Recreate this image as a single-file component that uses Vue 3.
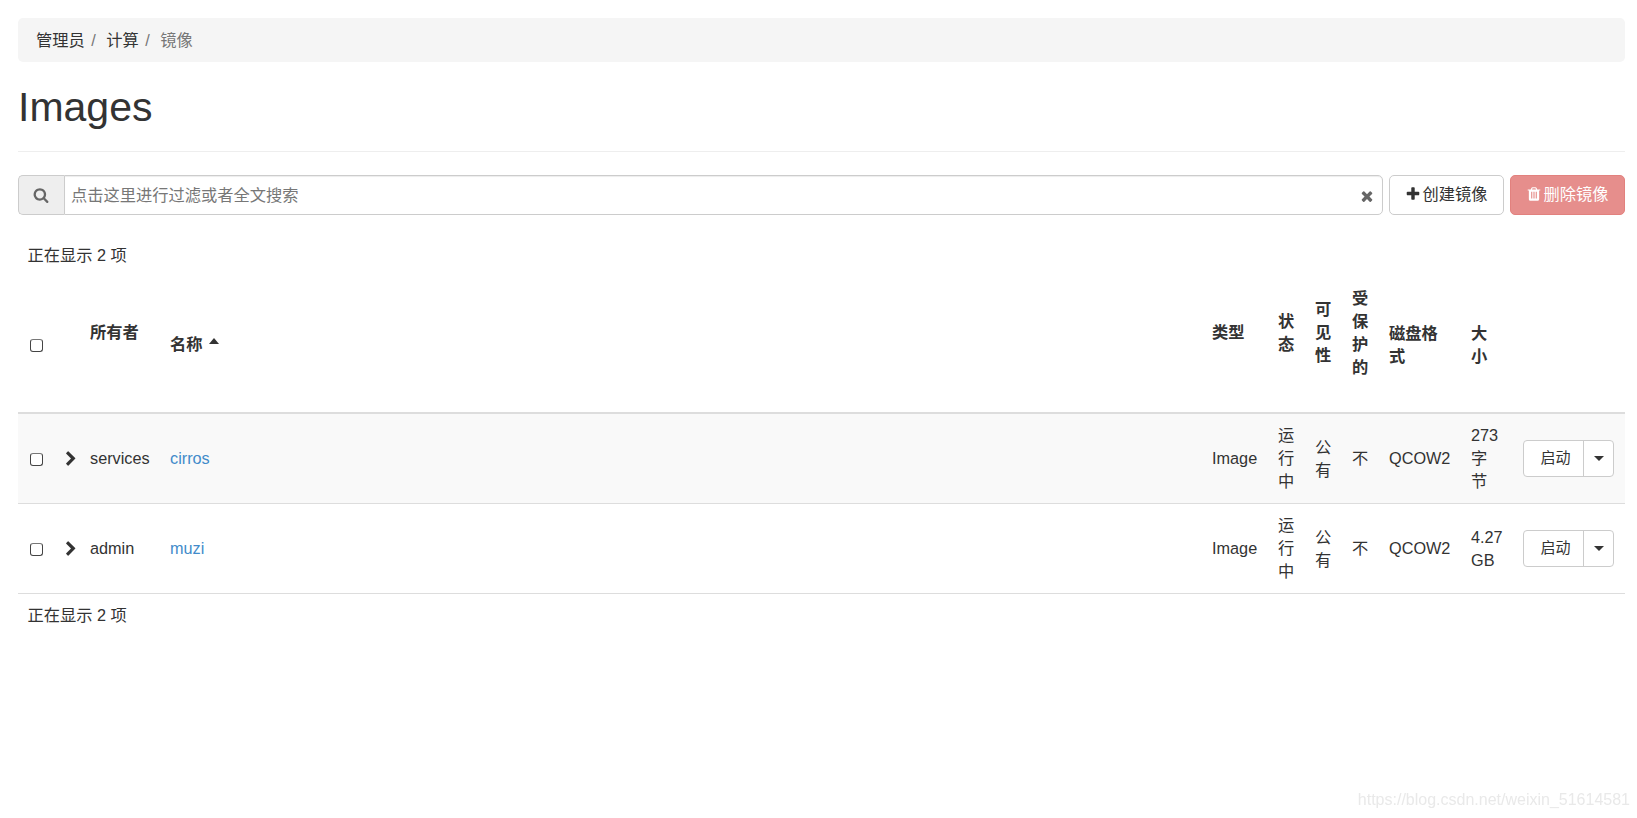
<template>
  <div class="page">
    <ol class="breadcrumb">
      <li v-for="(crumb, index) in crumbs" :key="crumb" :class="{ active: index === crumbs.length - 1 }">
        <a v-if="index < crumbs.length - 1" href="#">{{ crumb }}</a>
        <span v-else>{{ crumb }}</span>
      </li>
    </ol>

    <div class="page-header">
      <h1>Images</h1>
    </div>

    <div class="toolbar">
      <div class="search">
        <span class="addon">
          <svg class="icon" viewBox="0 0 1792 1792"><path :d="icons.search" /></svg>
        </span>
        <div class="search-box">
          <input v-model="keyword" type="text" placeholder="点击这里进行过滤或者全文搜索" />
          <svg class="icon clear" viewBox="0 0 1792 1792" @click="keyword = ''"><path :d="icons.close" /></svg>
        </div>
      </div>
      <button class="btn">
        <svg class="icon" viewBox="0 0 1792 1792"><path :d="icons.plus" /></svg>
        <span>创建镜像</span>
      </button>
      <button class="btn btn-danger" disabled>
        <svg class="icon" viewBox="0 0 1792 1792"><path :d="icons.trash" /></svg>
        <span>删除镜像</span>
      </button>
    </div>

    <div class="count">正在显示 {{ images.length }} 项</div>
    <table class="image-table">
      <colgroup>
        <col class="c-check" />
        <col class="c-expand" />
        <col class="c-owner" />
        <col />
        <col class="c-type" />
        <col class="c-narrow" />
        <col class="c-narrow" />
        <col class="c-narrow" />
        <col class="c-format" />
        <col class="c-size" />
        <col class="c-action" />
      </colgroup>
      <thead>
        <tr>
          <th class="low check"><input type="checkbox" @change="toggleAll" /></th>
          <th></th>
          <th>所有者</th>
          <th class="low name">名称<i class="sort"></i></th>
          <th>类型</th>
          <th>状态</th>
          <th>可见性</th>
          <th>受保护的</th>
          <th class="low">磁盘格式</th>
          <th class="low">大小</th>
          <th></th>
        </tr>
      </thead>
      <tbody>
        <tr v-for="image in images" :key="image.name">
          <td class="check"><input v-model="image.checked" type="checkbox" /></td>
          <td class="expand">
            <svg class="icon" viewBox="0 0 1792 1792"><path :d="icons.chevron" /></svg>
          </td>
          <td>{{ image.owner }}</td>
          <td><a href="#">{{ image.name }}</a></td>
          <td>{{ image.type }}</td>
          <td>{{ image.status }}</td>
          <td>{{ image.visibility }}</td>
          <td>{{ image.isProtected }}</td>
          <td>{{ image.format }}</td>
          <td>{{ image.size }}</td>
          <td class="action">
            <div class="btn-group">
              <button class="launch">启动</button>
              <button class="toggle"><i class="caret"></i></button>
            </div>
          </td>
        </tr>
      </tbody>
    </table>
    <div class="count bottom">正在显示 {{ images.length }} 项</div>

    <div class="watermark">https://blog.csdn.net/weixin_51614581</div>
  </div>
</template>

<script setup>
import { ref } from 'vue';

const crumbs = ['管理员', '计算', '镜像'];

const keyword = ref('');

const images = ref([
  { owner: 'services', name: 'cirros', type: 'Image', status: '运行中', visibility: '公有', isProtected: '不', format: 'QCOW2', size: '273 字节', checked: false },
  { owner: 'admin', name: 'muzi', type: 'Image', status: '运行中', visibility: '公有', isProtected: '不', format: 'QCOW2', size: '4.27 GB', checked: false },
]);

const toggleAll = (event) => {
  images.value.forEach(image => {
    image.checked = event.target.checked;
  });
};

const icons = {
  search: 'M1216 832q0-185-131.5-316.5t-316.5-131.5-316.5 131.5-131.5 316.5 131.5 316.5 316.5 131.5 316.5-131.5 131.5-316.5zm512 832q0 52-38 90t-90 38q-54 0-90-38l-343-342q-179 124-399 124-143 0-273.5-55.5t-225-150-150-225-55.5-273.5 55.5-273.5 150-225 225-150 273.5-55.5 273.5 55.5 225 150 150 225 55.5 273.5q0 220-124 399l343 343q37 37 37 90z',
  close: 'M1490 1322q0 40-28 68l-136 136q-28 28-68 28t-68-28l-294-294-294 294q-28 28-68 28t-68-28l-136-136q-28-28-28-68t28-68l294-294-294-294q-28-28-28-68t28-68l136-136q28-28 68-28t68 28l294 294 294-294q28-28 68-28t68 28l136 136q28 28 28 68t-28 68l-294 294 294 294q28 28 28 68z',
  plus: 'M1600 736v192q0 40-28 68t-68 28h-416v416q0 40-28 68t-68 28h-192q-40 0-68-28t-28-68v-416h-416q-40 0-68-28t-28-68v-192q0-40 28-68t68-28h416v-416q0-40 28-68t68-28h192q40 0 68 28t28 68v416h416q40 0 68 28t28 68z',
  trash: 'M704 1376v-704q0-14-9-23t-23-9h-64q-14 0-23 9t-9 23v704q0 14 9 23t23 9h64q14 0 23-9t9-23zm256 0v-704q0-14-9-23t-23-9h-64q-14 0-23 9t-9 23v704q0 14 9 23t23 9h64q14 0 23-9t9-23zm256 0v-704q0-14-9-23t-23-9h-64q-14 0-23 9t-9 23v704q0 14 9 23t23 9h64q14 0 23-9t9-23zm-544-992h448l-48-117q-7-9-17-11h-317q-10 2-17 11zm928 32v64q0 14-9 23t-23 9h-96v948q0 83-47 143.5t-113 60.5h-832q-66 0-113-58.5t-47-141.5v-952h-96q-14 0-23-9t-9-23v-64q0-14 9-23t23-9h309l70-167q15-37 54-63t79-26h320q40 0 79 26t54 63l70 167h309q14 0 23 9t9 23z',
  chevron: 'M1363 877l-742 742q-19 19-45 19t-45-19l-166-166q-19-19-19-45t19-45l531-531-531-531q-19-19-19-45t19-45l166-166q19-19 45-19t45 19l742 742q19 19 19 45t-19 45z',
};
</script>

<style>
body {
  background: #fff;
}
</style>

<style scoped>
.page {
  box-sizing: border-box;
  width: 100%;
  padding: 18px 12px 0 18px;
  font-family: "Liberation Sans", "Noto Sans CJK SC", sans-serif;
  font-size: 16.25px;
  line-height: 23px;
  color: #333;
}

a {
  color: #428bca;
  text-decoration: none;
}

.icon {
  width: 16px;
  height: 16px;
  fill: currentColor;
  flex: none;
}

.breadcrumb {
  display: flex;
  align-items: center;
  box-sizing: border-box;
  height: 44px;
  margin: 0;
  padding: 0 18px;
  list-style: none;
  background: #f5f5f5;
  border-radius: 5px;
}

.breadcrumb li + li::before {
  content: "/";
  padding: 0 10.5px 0 6.5px;
  color: #777;
}

.breadcrumb a {
  color: #333;
}

.breadcrumb .active {
  color: #777;
}

.page-header {
  height: 89px;
  border-bottom: 1px solid #eee;
}

h1 {
  margin: 0;
  padding-top: 23px;
  font-size: 41px;
  font-weight: 500;
  line-height: 45px;
}

.toolbar {
  display: flex;
  gap: 6px;
  height: 40px;
  margin-top: 23px;
}

.search {
  display: flex;
  flex: 1;
}

.addon {
  display: flex;
  align-items: center;
  justify-content: center;
  box-sizing: border-box;
  width: 46px;
  padding-right: 1px;
  color: #666;
  background: #eee;
  border: 1px solid #ccc;
  border-right: none;
  border-radius: 5px 0 0 5px;
}

.search-box {
  display: flex;
  flex: 1;
  align-items: center;
  box-sizing: border-box;
  padding: 0 7px 0 6px;
  border: 1px solid #ccc;
  border-radius: 0 5px 5px 0;
  box-shadow: inset 0 1px 1px rgba(0, 0, 0, 0.075);
}

.search-box input {
  flex: 1;
  padding: 0;
  font: inherit;
  color: #555;
  background: none;
  border: none;
  outline: none;
}

.search-box input::placeholder {
  color: #777;
  opacity: 1;
}

.clear {
  margin-top: 1px;
  color: #666;
}

.btn {
  display: flex;
  align-items: center;
  justify-content: center;
  gap: 2px;
  box-sizing: border-box;
  width: 115px;
  padding: 0 1px 2px 0;
  font: inherit;
  color: #333;
  background: #fff;
  border: 1px solid #ccc;
  border-radius: 5px;
}

.btn-danger {
  color: #fff;
  background: #d9534f;
  border-color: #d43f3a;
  opacity: 0.65;
}

.count {
  padding: 29px 9.5px 9px;
}

.count.bottom {
  padding-top: 10px;
}

.image-table {
  width: 100%;
  table-layout: fixed;
  border-collapse: separate;
  border-spacing: 0;
}

.c-check { width: 37px; }
.c-expand { width: 25px; }
.c-owner { width: 80px; }
.c-type { width: 66px; }
.c-narrow { width: 37px; }
.c-format { width: 82px; }
.c-size { width: 52px; }
.c-action { width: 112px; }

th {
  box-sizing: border-box;
  height: 138px;
  padding: 10px 10px 33px;
  font-weight: bold;
  text-align: left;
  vertical-align: middle;
  border-bottom: 2px solid #ddd;
}

th.low {
  padding-top: 22px;
  padding-bottom: 21px;
}

td {
  box-sizing: border-box;
  height: 90px;
  padding: 10px;
  vertical-align: middle;
  border-bottom: 1px solid #ddd;
}

tbody tr:nth-child(odd) td {
  background: #f9f9f9;
}

th.check,
td.check {
  padding-left: 12px;
  padding-right: 0;
}

.check input {
  display: block;
  appearance: none;
  box-sizing: border-box;
  width: 13px;
  height: 13px;
  margin: 2px 0 0;
  background: #fff;
  border: 1px solid #444;
  border-top-color: #777;
  border-radius: 3px;
}

td.expand {
  padding: 0 0 0 8px;
}

.expand .icon {
  display: block;
}

.sort {
  display: inline-block;
  margin-left: 6px;
  vertical-align: 6px;
  border: 5px solid transparent;
  border-top: none;
  border-bottom: 6px solid #333;
}

td.action {
  padding: 0 10px;
}

.btn-group {
  display: flex;
  box-sizing: border-box;
  width: 91px;
  height: 37px;
  background: #fff;
  border: 1px solid #ccc;
  border-radius: 4px;
}

.btn-group button {
  padding: 0;
  font: inherit;
  font-size: 15px;
  color: #333;
  background: none;
  border: none;
}

.btn-group .launch {
  width: 59px;
  padding: 0 0 2px 4px;
}

.btn-group .toggle {
  display: flex;
  flex: 1;
  align-items: center;
  justify-content: center;
  border-left: 1px solid #ccc;
}

.caret {
  margin-bottom: 1px;
  border: 5px solid transparent;
  border-top: 5px solid #333;
  border-bottom: none;
}

.watermark {
  position: fixed;
  right: 7px;
  bottom: 7px;
  font-size: 16px;
  color: #e9e9e9;
}
</style>
